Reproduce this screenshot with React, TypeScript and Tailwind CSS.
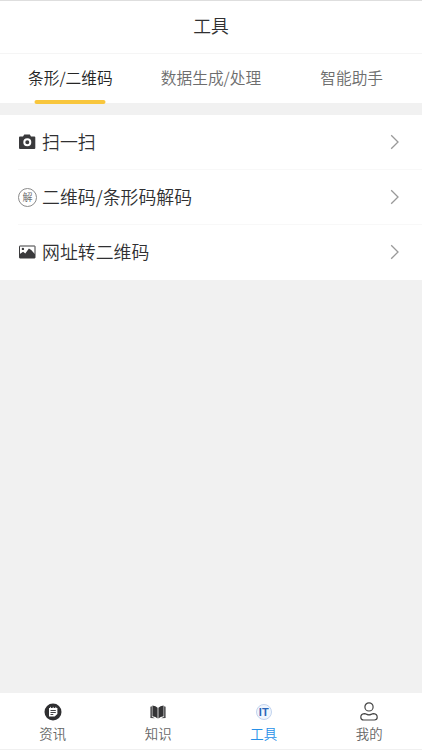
import type { ReactNode } from 'react';

const CameraIcon = () => (
    <svg width="18" height="18" viewBox="0 0 18 18">
        <path fill="#3a3a3c" d="M6.3 1.6h5.5l1.2 2h3.3q1 0 1 1v10.3q0 1-1 1H2q-1 0-1-1V4.6q0-1 1-1h3z" />
        <circle cx="9.3" cy="9.3" r="3" fill="#3a3a3c" stroke="#fff" strokeWidth="2" />
    </svg>
);

const DecodeIcon = () => (
    <span className="flex size-[19px] shrink-0 items-center justify-center rounded-full border border-[#8b8b8b] text-[10px] leading-none font-normal text-[#707070]">
        解
    </span>
);

const PictureIcon = () => (
    <svg width="18" height="18" viewBox="0 0 18 18">
        <rect x="1.5" y="3" width="15.5" height="12" rx=".3" fill="#fff" stroke="#3a3a3c" />
        <path fill="#3a3a3c" d="M1.5 15v-3.7l3.6-2.6 2.2 1.8 3.6-5 2.3 1.4 3.8 4.4V15z" />
        <circle cx="4.9" cy="5.9" r="1.2" fill="#3a3a3c" />
    </svg>
);

const NewsIcon = () => (
    <svg width="18" height="18" viewBox="0 0 18 18">
        <circle cx="9" cy="9" r="8.5" fill="#2f2f31" />
        <path fill="#fff" d="M5 5h8.4v6l-2.7 2.6H5z" />
        <path fill="none" stroke="#2f2f31" strokeWidth=".9" d="M6.5 7.5h5.3M6.5 9.5h5.3M6.5 11.5h2.8" />
        <path stroke="#fff" strokeWidth=".8" d="M6.5 3.9v2M9.2 3.9v2M11.8 3.9v2" />
    </svg>
);

const BookIcon = () => (
    <svg width="18" height="18" viewBox="0 0 18 18">
        <path fill="#343436" d="M3.4 2.4q3.5.3 5.2 2.3v10.9q-1.9-1.8-5.2-2.3zM14.6 2.4q-3.5.3-5.2 2.3v10.9q1.9-1.8 5.2-2.3z" />
        <path fill="#4a4a4c" d="M1.4 3.8l1.5-.6v10.5l3 1.5-4.5-.2zM16.6 3.8l-1.5-.6v10.5l-3 1.5 4.5-.2z" />
    </svg>
);

const ToolsIcon = () => (
    <span className="flex size-4 items-center justify-center rounded-full border-[1.5px] border-[#c2d4ef] bg-[#f1f6fd] pt-0.5 font-['Liberation_Sans'] text-[11px] font-bold leading-none text-[#2c66b8]">
        IT
    </span>
);

const UserIcon = () => (
    <svg width="20" height="20" viewBox="0 0 20 20" fill="none" stroke="#454545" strokeWidth="1.2">
        <circle cx="10" cy="4.9" r="4.1" />
        <path d="M5.2 11.6q1.7 0 2.8.8 2 1 4 0 1.1-.8 2.8-.8 3.4.3 3.4 3.7 0 2.7-2.8 2.7H4.6q-2.8 0-2.8-2.7 0-3.4 3.4-3.7z" />
    </svg>
);

const tabs = [
    { label: '条形/二维码', active: true },
    { label: '数据生成/处理', active: false },
    { label: '智能助手', active: false },
];

const rows: { label: string; icon: ReactNode }[] = [
    { label: '扫一扫', icon: <CameraIcon /> },
    { label: '二维码/条形码解码', icon: <DecodeIcon /> },
    { label: '网址转二维码', icon: <PictureIcon /> },
];

const navItems: { label: string; icon: ReactNode; active?: boolean }[] = [
    { label: '资讯', icon: <NewsIcon /> },
    { label: '知识', icon: <BookIcon /> },
    { label: '工具', icon: <ToolsIcon />, active: true },
    { label: '我的', icon: <UserIcon /> },
];

const App = () => {
    return (
        <div className="flex h-screen w-full flex-col overflow-hidden bg-[#f1f1f1] font-['Noto_Sans_CJK_SC',sans-serif] font-[350]">
            <header className="flex h-[54px] shrink-0 items-center justify-center border-t border-b border-t-[#dedede] border-b-[#f5f5f5] bg-white pb-0.5">
                <h1 className="text-[17.8px] leading-none font-[350] text-[#303032]">工具</h1>
            </header>

            <nav className="grid h-[49px] shrink-0 grid-cols-3 bg-white">
                {tabs.map((tab) => (
                    <button
                        key={tab.label}
                        className={`relative flex items-center justify-center pb-0.5 text-[15.7px] leading-none ${tab.active ? 'text-[#252525]' : 'text-[#6d6d6d]'}`}
                    >
                        {tab.label}
                        {tab.active && (
                            <span className="absolute -bottom-px left-1/2 h-1 w-[71px] -translate-x-1/2 rounded-sm bg-[#f8c63d]" />
                        )}
                    </button>
                ))}
            </nav>

            <ul className="mt-3 shrink-0 bg-white pl-[18px]">
                {rows.map((row) => (
                    <li key={row.label} className="flex h-[55px] items-center border-b border-[#f8f8f8] pr-[22px] last:border-white">
                        <span className="flex w-6 shrink-0 items-center">{row.icon}</span>
                        <span className="flex-1 text-[17.9px] leading-none text-[#303032]">{row.label}</span>
                        <svg width="10" height="16" viewBox="0 0 10 16" fill="none" stroke="#999" strokeWidth="1.3">
                            <path d="M1.2 1.3L8 8l-6.8 6.7" />
                        </svg>
                    </li>
                ))}
            </ul>

            <footer className="mt-auto grid h-[57px] shrink-0 grid-cols-4 border-b border-[#f0f0f0] bg-white">
                {navItems.map((item) => (
                    <button
                        key={item.label}
                        className={`flex flex-col items-center pt-[9px] text-[13.4px] leading-none ${item.active ? 'text-[#2790e8]' : 'text-[#666666]'}`}
                    >
                        <span className="flex h-[19px] items-center">{item.icon}</span>
                        <span className="mt-1.5">{item.label}</span>
                    </button>
                ))}
            </footer>
        </div>
    );
};

export default App;
